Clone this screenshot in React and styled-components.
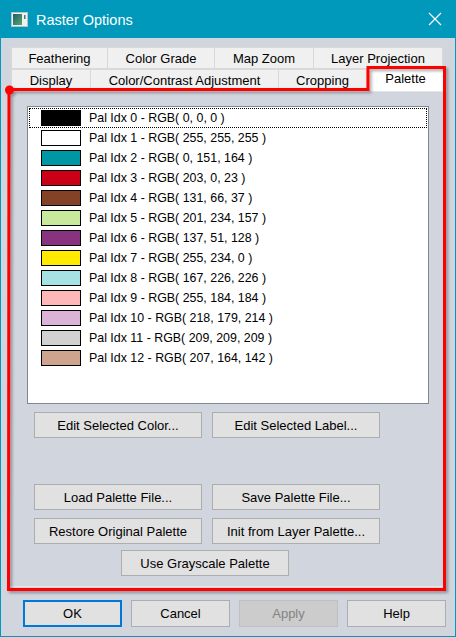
import React from 'react'
import styled, { createGlobalStyle } from 'styled-components'

const GlobalStyle = createGlobalStyle`
  html, body {
    margin: 0;
    padding: 0;
    background: #d1d5de;
  }
  body {
    font-family: "Liberation Sans", Arial, sans-serif;
  }
`

const Window = styled.div`
  position: relative;
  width: 456px;
  height: 637px;
  box-sizing: border-box;
  background: #d1d5de;
  border: 1px solid #0099bc;
  border-top: none;
  display: flex;
  flex-direction: column;
  overflow: hidden;
`

const TitleBar = styled.div`
  height: 38px;
  flex-shrink: 0;
  background: #0099bc;
  display: flex;
  align-items: center;
  padding: 0 13px 0 10px;
  color: #fff;
`

const Title = styled.div`
  flex: 1;
  margin-left: 8px;
  font-size: 14.5px;
  padding-top: 1px;
`

const Body = styled.div`
  flex: 1;
  display: flex;
  flex-direction: column;
  padding: 8px 9px 9px 8px;
  min-height: 0;
`

const TabControl = styled.div`
  flex: 1;
  display: flex;
  flex-direction: column;
`

const TabRow = styled.div`
  display: flex;
  height: 22px;
  padding-left: 2px;
  margin-top: ${p => p.$top ? '1px' : '0'};
`

const Tab = styled.div`
  box-sizing: border-box;
  width: ${p => p.$w}px;
  height: ${p => p.$active ? '24px' : '22px'};
  margin-top: ${p => p.$active ? '-2px' : '0'};
  background: ${p => p.$active ? '#ffffff' : '#f0f0f0'};
  border: 1px solid #d9d9d9;
  border-left: ${p => p.$first ? '1px solid #d9d9d9' : 'none'};
  border-bottom: ${p => p.$active ? 'none' : '1px solid #d9d9d9'};
  display: flex;
  align-items: center;
  justify-content: center;
  font-size: 13px;
  color: #000;
  padding-bottom: ${p => p.$active ? '3px' : '0'};
  position: relative;
  z-index: ${p => p.$active ? 1 : 0};
`

const Panel = styled.div`
  flex: 1;
  display: flex;
  flex-direction: column;
  border: 1px solid #e6e6e6;
  padding: 14px 0 0 17px;
`

const ListBox = styled.div`
  box-sizing: border-box;
  width: 402px;
  height: 298px;
  background: #fff;
  border: 1px solid #828790;
  padding: 1px;
`

const Item = styled.div`
  box-sizing: border-box;
  height: 20px;
  display: flex;
  align-items: center;
  padding-left: 11px;
  border: 1px dotted ${p => p.$focused ? '#000' : 'transparent'};
  font-size: 12.4px;
  color: #000;
`

const Swatch = styled.div`
  box-sizing: border-box;
  width: 40px;
  height: 16px;
  border: 1px solid #000;
  background: ${p => p.$color};
  margin-right: 8px;
`

const ButtonArea = styled.div`
  display: flex;
  flex-direction: column;
  padding-left: 7px;
`

const ButtonRow = styled.div`
  display: flex;
  gap: 10px;
  margin-top: ${p => p.$gap}px;
  margin-left: ${p => p.$indent || 0}px;
`

const Button = styled.div`
  box-sizing: border-box;
  width: ${p => p.$w || 168}px;
  height: ${p => p.$h || 26}px;
  background: ${p => p.$disabled ? '#cccccc' : '#e1e1e1'};
  border: ${p => p.$default ? '2px solid #0078d7' : `1px solid ${p.$disabled ? '#bfbfbf' : '#adadad'}`};
  color: ${p => p.$disabled ? '#838383' : '#000'};
  display: flex;
  align-items: center;
  justify-content: center;
  font-size: 13px;
`

const Footer = styled.div`
  display: flex;
  justify-content: flex-end;
  gap: 9px;
  margin-top: 13px;
`

const Overlay = styled.svg`
  position: absolute;
  left: -1px;
  top: 0;
  z-index: 5;
  pointer-events: none;
`

const palette = [
  [0, 0, 0],
  [255, 255, 255],
  [0, 151, 164],
  [203, 0, 23],
  [131, 66, 37],
  [201, 234, 157],
  [137, 51, 128],
  [255, 234, 0],
  [167, 226, 226],
  [255, 184, 184],
  [218, 179, 214],
  [209, 209, 209],
  [207, 164, 142],
]

const row1 = [['Feathering', 97], ['Color Grade', 107], ['Map Zoom', 99], ['Layer Projection', 129]]
const row2 = [['Display', 80], ['Color/Contrast Adjustment', 188], ['Cropping', 88], ['Palette', 78]]

function AppIcon() {
  return (
    <svg width="17" height="15" viewBox="0 0 17 15">
      <defs>
        <linearGradient id="ig" x1="0" y1="0" x2="1" y2="1">
          <stop offset="0" stopColor="#1f5e6e" />
          <stop offset="1" stopColor="#5aa86a" />
        </linearGradient>
      </defs>
      <rect x="0.5" y="0.5" width="16" height="14" fill="#eef2f2" stroke="#b9c3c6" />
      <rect x="2" y="2" width="9" height="11" fill="url(#ig)" />
      <rect x="13" y="3" width="1.5" height="4" fill="#4a7a78" />
    </svg>
  )
}

function CloseIcon() {
  return (
    <svg width="14" height="14" viewBox="0 0 14 14">
      <path d="M1 1 L13 13 M13 1 L1 13" stroke="#fff" strokeWidth="1.2" fill="none" />
    </svg>
  )
}

function Highlight() {
  return (
    <Overlay width="456" height="637" viewBox="0 0 456 637">
      <defs>
        <filter id="sh" x="-5%" y="-5%" width="110%" height="110%">
          <feDropShadow dx="2" dy="2" stdDeviation="1.5" floodColor="#000" floodOpacity="0.35" />
        </filter>
      </defs>
      <g filter="url(#sh)">
        <path
          d="M9 89.5 L368 89.5 L368 67.5 L444.5 67.5 L444.5 589.5 L8.5 589.5 Z"
          fill="none"
          stroke="#ff0000"
          strokeWidth="3"
        />
        <circle cx="9.5" cy="90" r="4.5" fill="#ff0000" />
      </g>
    </Overlay>
  )
}

function App() {
  return (
    <>
      <GlobalStyle />
      <Window>
        <TitleBar>
          <AppIcon />
          <Title>Raster Options</Title>
          <CloseIcon />
        </TitleBar>
        <Body>
          <TabControl>
            <TabRow $top>
              {row1.map(([label, w], i) => (
                <Tab key={label} $w={w} $first={i === 0}>{label}</Tab>
              ))}
            </TabRow>
            <TabRow>
              {row2.map(([label, w], i) => (
                <Tab key={label} $w={w} $first={i === 0} $active={label === 'Palette'}>{label}</Tab>
              ))}
            </TabRow>
            <Panel>
              <ListBox>
                {palette.map(([r, g, b], i) => (
                  <Item key={i} $focused={i === 0}>
                    <Swatch $color={`rgb(${r}, ${g}, ${b})`} />
                    Pal Idx {i} - RGB( {r}, {g}, {b} )
                  </Item>
                ))}
              </ListBox>
              <ButtonArea>
                <ButtonRow $gap={8}>
                  <Button>Edit Selected Color...</Button>
                  <Button>Edit Selected Label...</Button>
                </ButtonRow>
                <ButtonRow $gap={46}>
                  <Button>Load Palette File...</Button>
                  <Button>Save Palette File...</Button>
                </ButtonRow>
                <ButtonRow $gap={8}>
                  <Button>Restore Original Palette</Button>
                  <Button>Init from Layer Palette...</Button>
                </ButtonRow>
                <ButtonRow $gap={6} $indent={87}>
                  <Button>Use Grayscale Palette</Button>
                </ButtonRow>
              </ButtonArea>
            </Panel>
          </TabControl>
          <Footer>
            <Button $w={99} $h={27} $default>OK</Button>
            <Button $w={99} $h={27}>Cancel</Button>
            <Button $w={99} $h={27} $disabled>Apply</Button>
            <Button $w={99} $h={27}>Help</Button>
          </Footer>
        </Body>
        <Highlight />
      </Window>
    </>
  )
}

export default App
